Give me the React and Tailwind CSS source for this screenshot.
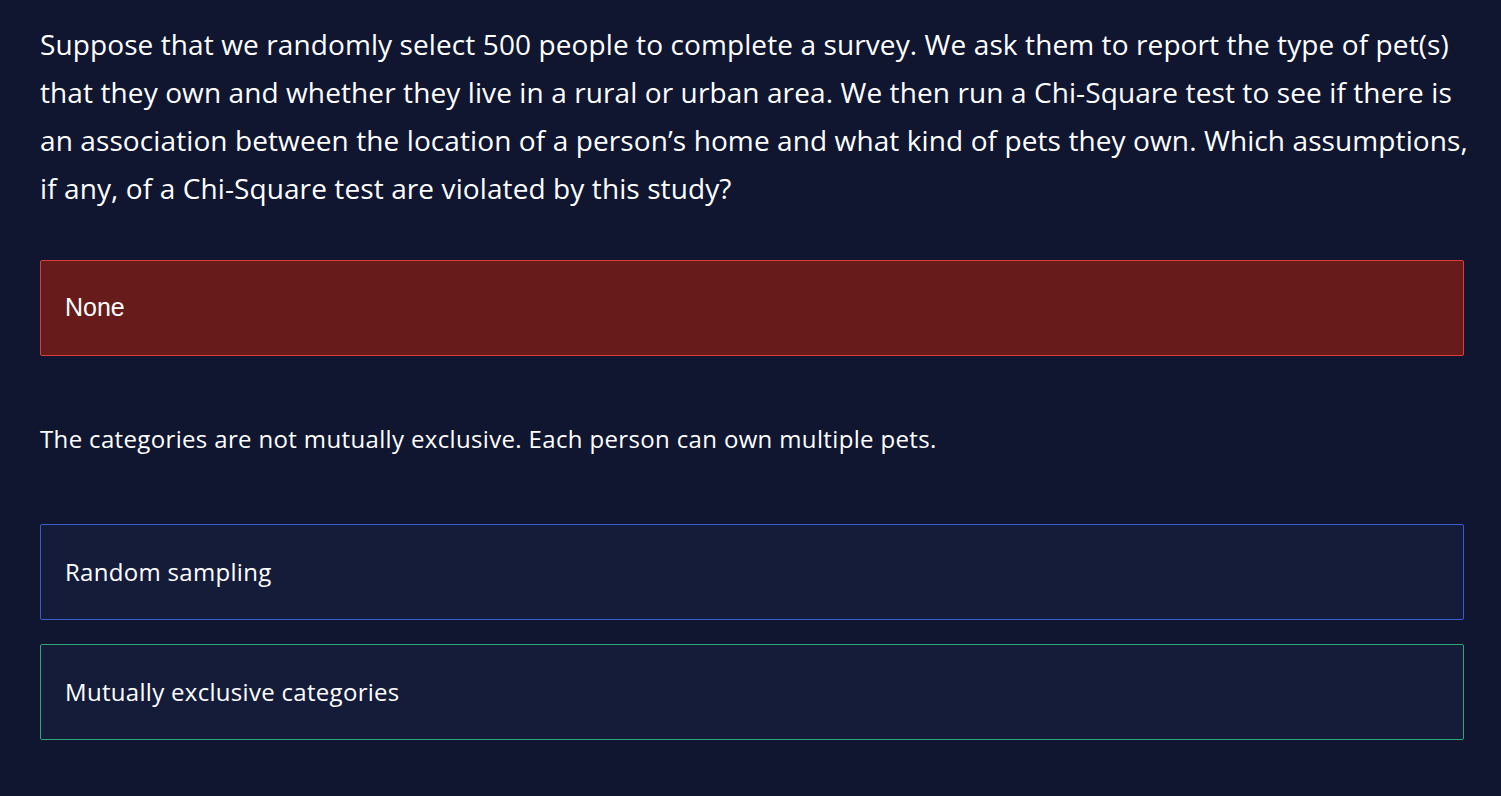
import React from 'react';

const questionLines = [
  'Suppose that we randomly select 500 people to complete a survey. We ask them to report the type of pet(s)',
  'that they own and whether they live in a rural or urban area. We then run a Chi-Square test to see if there is',
  'an association between the location of a person’s home and what kind of pets they own. Which assumptions,',
  'if any, of a Chi-Square test are violated by this study?',
];

const options = [
  { label: 'Random sampling', border: 'border-[#3a5ccc]' },
  { label: 'Mutually exclusive categories', border: 'border-[#2fa57a]' },
];

const App = () => {
  return (
    <div className="min-h-screen bg-[#10162f] text-white font-['Open_Sans',sans-serif]">
      <div className="pl-10 pr-[37px] pt-5">
        {/* Question */}
        <p className="text-[28px] leading-[48px] tracking-[0.1px] whitespace-nowrap">
          {questionLines.map((line, i) => (
            <span key={i} className="block">{line}</span>
          ))}
        </p>

        {/* Selected (wrong) answer */}
        <div className="mt-[48px] h-[96px] flex items-center px-6 rounded-[2px] border border-[#e0393e] bg-[#671b1b]">
          <span className="text-[25px] font-['Liberation_Sans',sans-serif]">None</span>
        </div>

        {/* Explanation */}
        <p className="mt-[67px] text-[24px] leading-[32px] tracking-[0.35px]">
          The categories are not mutually exclusive. Each person can own multiple pets.
        </p>

        {/* Remaining options */}
        <div className="mt-[69px] flex flex-col gap-6">
          {options.map((o) => (
            <div
              key={o.label}
              className={`h-[96px] flex items-center px-6 rounded-[2px] border bg-[#151c3a] ${o.border}`}
            >
              <span className="text-[24px] tracking-[0.3px]">{o.label}</span>
            </div>
          ))}
        </div>
      </div>
    </div>
  );
};

export default App;
